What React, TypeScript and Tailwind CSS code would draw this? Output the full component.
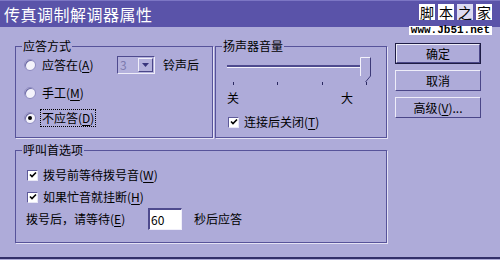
import React from "react";

const font = "font-['Noto_Sans_CJK_SC','Noto_Sans',sans-serif]";

function Key({ k }: { k: string }) {
  return (
    <>
      (<span className="underline underline-offset-2">{k}</span>)
    </>
  );
}

function Radio({ checked }: { checked?: boolean }) {
  return (
    <span className="relative inline-block w-[12px] h-[12px] shrink-0 rounded-full bg-[#f4f3fb] border border-[#8d8ac0] shadow-[inset_1px_1px_0_#6d6aa6]">
      {checked && (
        <span className="absolute left-[3px] top-[3px] w-[4px] h-[4px] rounded-full bg-black" />
      )}
    </span>
  );
}

function Check() {
  return (
    <span className="inline-flex w-[11px] h-[11px] shrink-0 items-center justify-center bg-white border-t border-l border-[#5e5a9a] border-b border-r border-b-[#e8e7f6] border-r-[#e8e7f6]">
      <svg width="8" height="8" viewBox="0 0 8 8">
        <path d="M1 3.5 L3 5.5 L7 1.5" stroke="#000" strokeWidth="1.6" fill="none" />
      </svg>
    </span>
  );
}

function Group({
  title,
  className,
  children,
}: {
  title: string;
  className: string;
  children: React.ReactNode;
}) {
  return (
    <fieldset
      className={
        "min-w-0 border border-[#57539a] shadow-[1px_1px_0_#e4e2f4] " + className
      }
    >
      <legend className="ml-[6px] px-[1px] leading-[14px]">{title}</legend>
      {children}
    </fieldset>
  );
}

function Button({ label, main }: { label: React.ReactNode; main?: boolean }) {
  return (
    <div
      className={
        "h-[21px] w-[86px] " + (main ? "border border-[#1e1c44]" : "")
      }
    >
      <div className="h-full w-full flex items-center justify-center border-t border-l border-[#eeedf9] border-b border-r border-b-[#4a4688] border-r-[#4a4688] leading-none">
        {label}
      </div>
    </div>
  );
}

export default function App() {
  return (
    <div
      className={
        "relative w-[500px] h-[260px] overflow-hidden bg-[#aeabd9] text-[12px] text-black " +
        font
      }
    >
      {/* title bar */}
      <div className="h-[27px] flex items-center pl-[4px] bg-[#5a53a9] border-t border-[#7c76c4] text-white text-[16px] tracking-[0.5px]">
        传真调制解调器属性
      </div>

      {/* watermark */}
      <div className="absolute right-[8px] top-[4px] flex flex-col items-end font-['Liberation_Mono',monospace]">
        <div className={"flex gap-[3px] text-[14px] leading-[16px] " + font}>
          <span className="bg-white px-[1px]">脚</span>
          <span className="bg-white px-[1px]">本</span>
          <span className="bg-[#dcdaf2] px-[1px]">之</span>
          <span className="bg-white px-[1px]">家</span>
        </div>
        <div className="mt-[6px] bg-white px-[2px] text-[11px] leading-[9px] font-bold">
          www.Jb51.net
        </div>
      </div>

      <div className="flex pl-[15px] pt-[12px]">
        <div className="w-[372px] flex flex-col">
          <div className="flex gap-[2px]">
            <Group title="应答方式" className="w-[198px] h-[99px]">
              <div className="pl-[8px] pt-[1px]">
                <div className="h-[22px] flex items-center">
                  <Radio />
                  <span className="ml-[6px] w-[75px]">
                    应答在<Key k="A" />
                  </span>
                  <div className="w-[38px] h-[18px] flex items-center justify-between border-t border-l border-[#4e4a8e] border-b border-r border-b-[#efeef9] border-r-[#efeef9] bg-[#b4b1dc]">
                    <span className="pl-[2px] text-[#7d7aae] leading-none">3</span>
                    <span className="w-[15px] h-[14px] mr-[1px] flex items-center justify-center border-t border-l border-[#f0effa] border-b border-r border-b-[#4a4688] border-r-[#4a4688]">
                      <svg width="7" height="4" viewBox="0 0 7 4">
                        <path d="M0 0 H7 L3.5 4 Z" fill="#39357c" />
                      </svg>
                    </span>
                  </div>
                  <span className="ml-[8px]">铃声后</span>
                </div>
                <div className="h-[22px] mt-[6px] flex items-center">
                  <Radio />
                  <span className="ml-[6px]">
                    手工<Key k="M" />
                  </span>
                </div>
                <div className="h-[22px] mt-[3px] flex items-center">
                  <Radio checked />
                  <span className="ml-[4px] px-[1px] border border-dotted border-black leading-[16px]">
                    不应答<Key k="D" />
                  </span>
                </div>
              </div>
            </Group>

            <Group title="扬声器音量" className="w-[172px] h-[99px]">
              <div className="pl-[11px] pt-[4px]">
                <div className="relative h-[25px] w-[148px]">
                  <div className="absolute left-0 top-[8px] w-[142px] h-[3px] border-t-2 border-[#4e4a8e] border-b border-b-[#f2f1fa]" />
                  <svg
                    className="absolute left-[133px] top-0"
                    width="12"
                    height="26"
                    viewBox="0 0 12 26"
                  >
                    <path d="M0.5 0.5 H10.5 V19 L5.5 25 L0.5 19 Z" fill="#aeabd9" />
                    <path d="M0.5 19 V0.5 H10.5" stroke="#f4f3fb" fill="none" />
                    <path d="M10.5 0.5 V19 L5.5 25" stroke="#3d3a78" fill="none" />
                  </svg>
                </div>
                <div className="flex justify-between w-[134px] ml-[6px]">
                  {[0, 1, 2, 3].map((i) => (
                    <span key={i} className="w-[1px] h-[3px] bg-[#2a2860]" />
                  ))}
                </div>
                <div className="flex w-[126px] justify-between mt-[6px] leading-[14px]">
                  <span>关</span>
                  <span>大</span>
                </div>
                <div className="h-[20px] mt-[7px] flex items-center ml-[1px]">
                  <Check />
                  <span className="ml-[5px]">
                    连接后关闭<Key k="T" />
                  </span>
                </div>
              </div>
            </Group>
          </div>

          <Group title="呼叫首选项" className="mt-[5px] w-[372px] h-[100px]">
            <div className="pl-[10px] pt-[8px]">
              <div className="h-[20px] flex items-center ml-[1px]">
                <Check />
                <span className="ml-[5px]">
                  拨号前等待拨号音<Key k="W" />
                </span>
              </div>
              <div className="h-[20px] mt-[2px] flex items-center ml-[1px]">
                <Check />
                <span className="ml-[5px]">
                  如果忙音就挂断<Key k="H" />
                </span>
              </div>
              <div className="h-[22px] mt-[1px] flex items-center">
                <span className="w-[122px]">
                  拨号后，请等待<Key k="E" />
                </span>
                <div className="w-[34px] h-[22px] flex items-center bg-white border-t-2 border-l-2 border-[#4e4a8e] border-b border-r border-b-[#f0effa] border-r-[#f0effa]">
                  <span className="pl-[1px] leading-none">60</span>
                </div>
                <span className="ml-[12px]">秒后应答</span>
              </div>
            </div>
          </Group>
        </div>

        <div className="ml-[8px] pt-[4px] flex flex-col gap-[6px]">
          <Button label="确定" main />
          <Button label="取消" />
          <Button
            label={
              <span>
                高级<Key k="V" />...
              </span>
            }
          />
        </div>
      </div>

      <div className="absolute left-0 right-0 bottom-[1px] h-[2px] bg-[#33306a]" />
    </div>
  );
}
